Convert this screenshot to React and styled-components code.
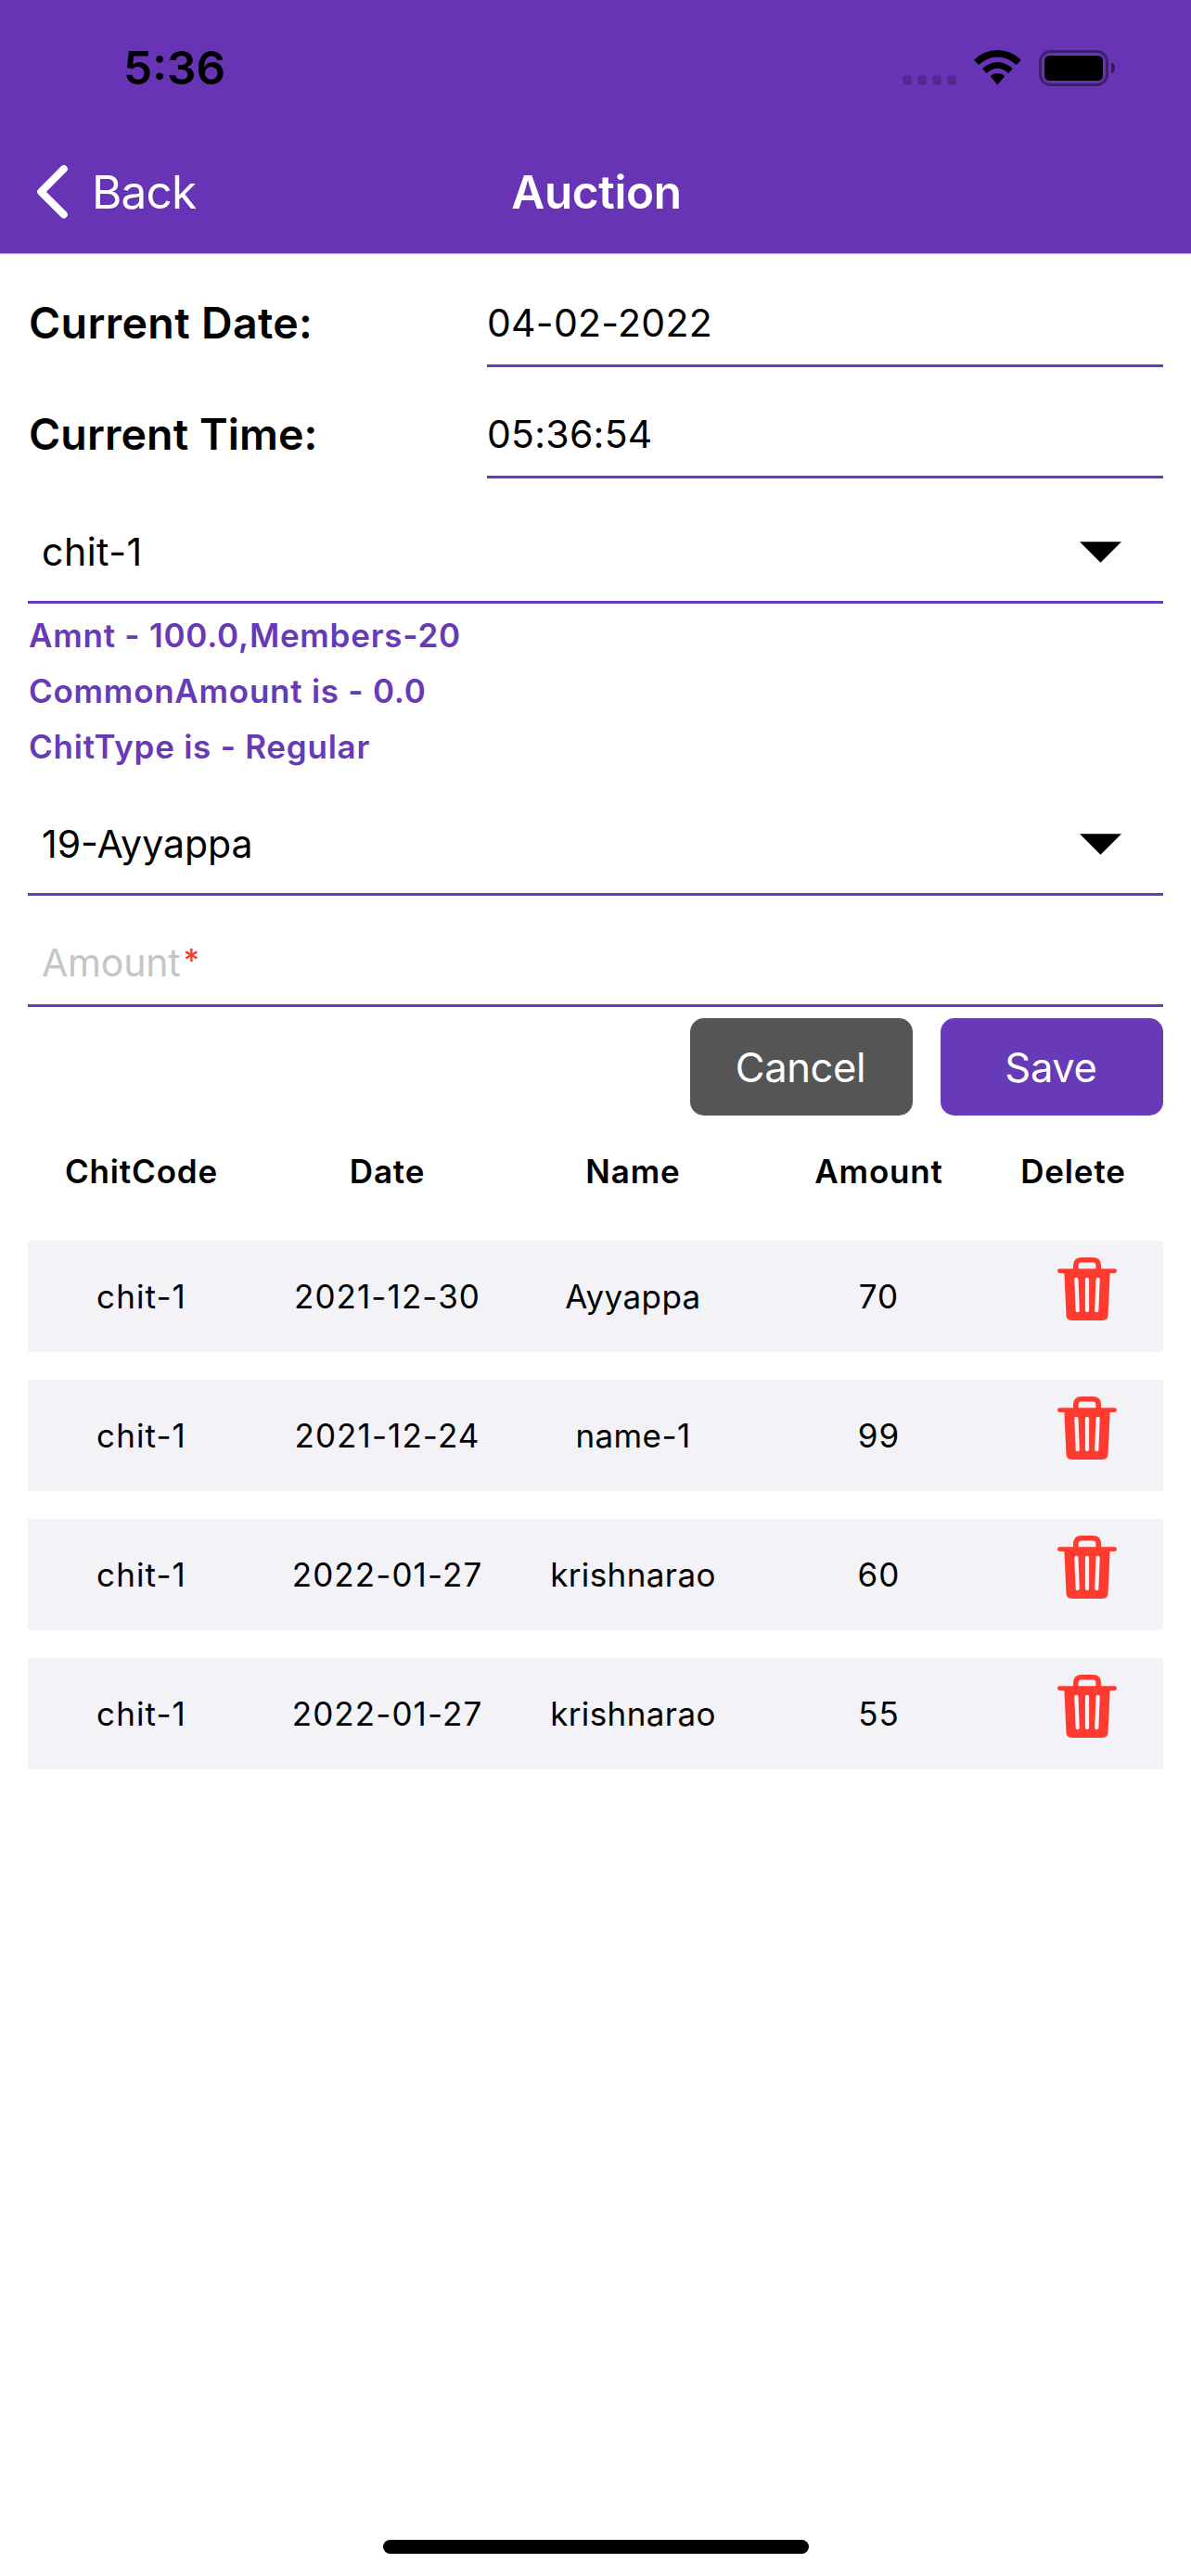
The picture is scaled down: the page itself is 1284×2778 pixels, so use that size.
import React from "react"
import styled, { createGlobalStyle } from "styled-components"

const GlobalStyle = createGlobalStyle`
  * {
    box-sizing: border-box;
  }

  body {
    margin: 0;
    background: #fff;
    color: #000;
    font-family: "Inter", "Liberation Sans", sans-serif;
  }
`

const purple = "#673ab7";

// Whole phone screen
const Screen = styled.div`
  width: 100%;
  height: 2778px;
  display: flex;
  flex-direction: column;
  background: #fff;
  overflow: hidden;
`

// Purple area on top, status bar and nav bar together
const Header = styled.header`
  background: #6734b6;
  border-bottom: 1px solid #ada9b4;
  height: 274px;
`

const StatusBar = styled.div`
  height: 141px;
  padding: 5px 81px 0 133px;
  display: flex;
  align-items: center;
  justify-content: space-between;
`

const Clock = styled.span`
  font-size: 49.5px;
  font-weight: 600;
`

const StatusIcons = styled.div`
  display: flex;
  align-items: center;
`

const NavBar = styled.nav`
  height: 132px;
  padding: 0 36px 0 38px;
  display: grid;
  grid-template-columns: 1fr auto 1fr;
  align-items: center;
`

const BackButton = styled.button`
  display: flex;
  align-items: center;
  gap: 24px;
  padding: 0;
  border: 0;
  background: none;
  color: #fff;
  font: 400 49.5px "Inter", sans-serif;
  letter-spacing: -0.8px;
`

const Title = styled.h1`
  margin: 0;
  color: #fff;
  font-size: 49.5px;
  font-weight: 600;
  letter-spacing: -0.35px;
`

const Content = styled.main`
  padding: 2px 30px 0;
`

// Label on the left, value with underline on the right
const InfoRow = styled.div`
  display: grid;
  grid-template-columns: 495px 1fr;
  height: 96px;
  margin-top: 24px;
  line-height: 96px;
`

const Label = styled.span`
  padding-left: 1px;
  font-size: 46.5px;
  font-weight: 600;
  letter-spacing: ${(props) => props.$tracking || 0}px;
`

const Value = styled.span`
  font-size: 41px;
  letter-spacing: 0.25px;
  box-shadow: inset 0 -3px 0 ${purple};
`

// Dropdowns
const Select = styled.div`
  display: flex;
  align-items: center;
  justify-content: space-between;
  height: 111px;
  margin-top: ${(props) => props.$top || 24}px;
  padding: 0 45px 1px 15px;
  font-size: 41px;
  letter-spacing: ${(props) => props.$tracking || 0}px;
  box-shadow: inset 0 -3px 0 ${purple};
`

const Details = styled.div`
  padding: 4px 0 0 1px;
  color: ${purple};
  font-size: 35px;
  font-weight: 600;
  letter-spacing: 0.75px;
  line-height: 60px;
`

const AmountField = styled.div`
  display: flex;
  height: 96px;
  margin-top: 24px;
  padding-left: 15px;
  line-height: 96px;
  font-size: 41px;
  letter-spacing: -0.2px;
  color: #c5c5c7;
  box-shadow: inset 0 -3px 0 ${purple};
`

const Required = styled.span`
  margin-left: 3px;
  color: #ff3b30;
  font-size: 34px;
  font-weight: 500;
  line-height: 91px;
`

const Actions = styled.div`
  display: flex;
  justify-content: flex-end;
  gap: 30px;
  margin-top: 12px;
`

const Button = styled.button`
  width: 240px;
  height: 105px;
  padding: 0 2px 0 0;
  border: 0;
  border-radius: 15px;
  background: ${(props) => (props.$primary ? purple : "#555")};
  color: #fff;
  font: 400 43.5px "Inter", sans-serif;
  letter-spacing: -0.35px;
`

// Table
const TableHead = styled.div`
  display: grid;
  grid-template-columns: repeat(4, 245px) 134px;
  column-gap: 20px;
  height: 120px;
  margin-bottom: 15px;
  font-size: 35px;
  font-weight: 600;
  letter-spacing: 0.85px;
  line-height: 120px;
  text-align: center;
`

const TableBody = styled.div`
  display: flex;
  flex-direction: column;
  gap: 30px;
`

const TableRow = styled.div`
  display: grid;
  grid-template-columns: repeat(4, 245px) 164px;
  column-gap: 20px;
  height: 120px;
  background: #f2f2f7;
  font-size: 35px;
  line-height: 120px;
  text-align: center;
`

const Cell = styled.span`
  letter-spacing: ${(props) => props.$tracking || 0}px;
`

const DeleteButton = styled.button`
  display: flex;
  justify-content: center;
  padding: 18px 0 0;
  border: 0;
  background: none;
`

const HomeIndicator = styled.div`
  width: 459px;
  height: 15px;
  margin: auto auto 24px;
  border-radius: 8px;
  background: #000;
`

const SignalIcon = () => (
  <svg width="77" height="38" viewBox="0 0 77 38" fill="#000" fillOpacity="0.2">
    <rect x="0" y="27.5" width="10" height="10" rx="3.2" />
    <rect x="16" y="27.5" width="10" height="10" rx="3.2" />
    <rect x="32" y="27.5" width="10" height="10" rx="3.2" />
    <rect x="48" y="27.5" width="10" height="10" rx="3.2" />
  </svg>
)

const WifiIcon = () => (
  <svg width="70" height="38" viewBox="0 0 70 38" fill="#000">
    <path d="M0 10.7A35.5 35.5 0 0 1 50.8 10.7L45.6 16A28.4 28.4 0 0 0 5.2 16Z" />
    <path d="M9 20.1A22.6 22.6 0 0 1 41.8 20.1L37 24.9A15.9 15.9 0 0 0 13.8 24.9Z" />
    <path d="M17.6 28.2A11 11 0 0 1 33.2 28.2L25.4 37.4Z" />
  </svg>
)

const BatteryIcon = () => (
  <svg width="83" height="39" viewBox="0 0 83 39">
    <rect x="1.5" y="1.5" width="72" height="36" rx="11" fill="none" stroke="#000" strokeOpacity="0.4" strokeWidth="3" />
    <rect x="6" y="6" width="63" height="27" rx="5.5" fill="#000" />
    <path d="M78 13.2C80.6 14.2 82 16.6 82 19.3S80.6 24.5 78 25.6Z" fill="#000" fillOpacity="0.5" />
  </svg>
)

const ChevronIcon = () => (
  <svg width="37" height="60" viewBox="0 0 37 60" fill="none" stroke="#fff" strokeWidth="8" strokeLinecap="round" strokeLinejoin="round">
    <path d="M30.8 5.2L6.2 29.8L30.8 54.4" />
  </svg>
)

const ArrowIcon = () => (
  <svg width="45" height="23" viewBox="0 0 45 23">
    <path d="M0 0.3H45L22.5 22.7Z" fill="#000" />
  </svg>
)

const TrashIcon = () => (
  <svg width="64" height="68" viewBox="0 0 64 68" fill="#ff3b30">
    <path d="M19.8 13V8.8Q19.8 2.8 25.8 2.8H38.2Q44.2 2.8 44.2 8.8V13" fill="none" stroke="#ff3b30" strokeWidth="5.6" />
    <rect x="0" y="12.2" width="64" height="4.8" rx="2.4" />
    <path d="M7.3 15H56.7L54.5 62.6Q54.2 68 48.8 68H15.2Q9.8 68 9.5 62.6Z" />
    <path d="M20.4 23.9L21.7 57.1M32 23.9V57.1M43.6 23.9L42.3 57.1" stroke="#f2f2f7" strokeWidth="4.2" strokeLinecap="round" />
  </svg>
)

const auctions = [
  { code: "chit-1", date: "2021-12-30", name: "Ayyappa", amount: 70 },
  { code: "chit-1", date: "2021-12-24", name: "name-1", amount: 99 },
  { code: "chit-1", date: "2022-01-27", name: "krishnarao", amount: 60 },
  { code: "chit-1", date: "2022-01-27", name: "krishnarao", amount: 55 },
]

export default function App() {
  return (
    <Screen>
      <GlobalStyle />
      <Header>
        <StatusBar>
          <Clock>5:36</Clock>
          <StatusIcons>
            <SignalIcon />
            <WifiIcon />
            <BatteryIcon />
          </StatusIcons>
        </StatusBar>
        <NavBar>
          <BackButton>
            <ChevronIcon />
            Back
          </BackButton>
          <Title>Auction</Title>
        </NavBar>
      </Header>

      <Content>
        <InfoRow>
          <Label $tracking={0.35}>Current Date:</Label>
          <Value>04-02-2022</Value>
        </InfoRow>
        <InfoRow>
          <Label $tracking={0.1}>Current Time:</Label>
          <Value>05:36:54</Value>
        </InfoRow>

        <Select $tracking={0.5}>
          chit-1
          <ArrowIcon />
        </Select>
        <Details>
          <div>Amnt - 100.0,Members-20</div>
          <div>CommonAmount is - 0.0</div>
          <div>ChitType is - Regular</div>
        </Details>
        <Select $top={20}>
          19-Ayyappa
          <ArrowIcon />
        </Select>
        <AmountField>
          Amount<Required>*</Required>
        </AmountField>

        <Actions>
          <Button>Cancel</Button>
          <Button $primary>Save</Button>
        </Actions>

        <TableHead>
          <span>ChitCode</span>
          <span>Date</span>
          <span>Name</span>
          <span>Amount</span>
          <span>Delete</span>
        </TableHead>
        <TableBody>
          {auctions.map((item, index) => (
            <TableRow key={index}>
              <Cell $tracking={1.1}>{item.code}</Cell>
              <Cell $tracking={1.1}>{item.date}</Cell>
              <Cell $tracking={0.4}>{item.name}</Cell>
              <Cell $tracking={1}>{item.amount}</Cell>
              <DeleteButton>
                <TrashIcon />
              </DeleteButton>
            </TableRow>
          ))}
        </TableBody>
      </Content>

      <HomeIndicator />
    </Screen>
  );
}
